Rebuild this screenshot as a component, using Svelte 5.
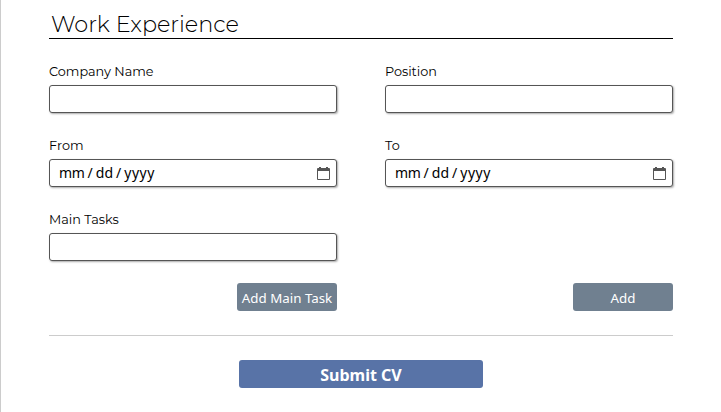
<script>
  const rows = [
    [{ label: 'Company Name' }, { label: 'Position' }],
    [{ label: 'From', date: true }, { label: 'To', date: true }],
    [{ label: 'Main Tasks' }]
  ];
</script>

<main>
  <h2><span>Work Experience</span></h2>
  {#each rows as row}
    <div class="row">
      {#each row as field}
        <div class="field">
          <div class="label"><span>{field.label}</span></div>
          {#if field.date}
            <div class="box">
              <span class="date"><span class="month">mm</span><i>/</i><span>dd</span><i>/</i><span class="year">yyyy</span></span>
              <svg width="13" height="13" viewBox="0 0 13 13" fill="#555">
                <path fill-rule="evenodd" d="M1 1H2V0H4V1H9V0H11V1H12Q13 1 13 2V12Q13 13 12 13H1Q0 13 0 12V2Q0 1 1 1ZM1 4V12H12V4Z" />
              </svg>
            </div>
          {:else}
            <input class="box" type="text" aria-label={field.label} />
          {/if}
        </div>
      {/each}
    </div>
  {/each}
  <div class="actions">
    <div><button>Add Main Task</button></div>
    <div><button>Add</button></div>
  </div>
  <hr />
  <button class="submit">Submit CV</button>
</main>

<style>
  :global(body) { background: #fff; }
  main {
    box-sizing: border-box;
    width: 721px;
    height: 412px;
    overflow: hidden;
    border-left: 1px solid #ccc;
    padding: 9px 48px 0;
    display: flex;
    flex-direction: column;
    color: #000;
    font-family: Montserrat, Inter, sans-serif;
  }
  h2 {
    margin: 0 0 25px;
    height: 29px;
    border-bottom: 1px solid #000;
    padding-left: 2px;
    font-size: 22.4px;
    font-weight: 300;
    line-height: 30px;
    white-space: nowrap;
  }
  .row, .actions { display: flex; gap: 48px; }
  .row { height: 74px; flex: none; }
  .field { width: 288px; }
  .label { height: 21px; font-size: 12.8px; line-height: 16px; }
  .box {
    box-sizing: border-box;
    display: flex;
    align-items: center;
    justify-content: space-between;
    width: 288px;
    height: 28px;
    margin: 0;
    border: 1px solid #555;
    border-radius: 3px;
    padding: 0 6px 0 9px;
    background: #fff;
    box-shadow: 1px 1px 2px #aaa;
    outline: none;
  }
  .date { display: flex; font: 14px/26px "Noto Sans", sans-serif; }
  .date i { font-style: normal; padding: 0 3px; }
  .date .month { letter-spacing: -0.3px; }
  .date .year { letter-spacing: 0.5px; }
  .actions { margin-top: -3px; }
  .actions div { width: 288px; display: flex; justify-content: flex-end; }
  button {
    width: 100px;
    height: 28px;
    border: 0;
    border-radius: 3px;
    padding: 2px 0 0;
    color: #fff;
    background: #708090;
    font: 13.33px/26px "Noto Sans", sans-serif;
    white-space: nowrap;
  }
  hr { width: 100%; height: 1px; margin: 24px 0; border: 0; background: #ccc; flex: none; }
  .submit { align-self: center; width: 244px; background: #5873a7; font-size: 16px; font-weight: 700; }
</style>
